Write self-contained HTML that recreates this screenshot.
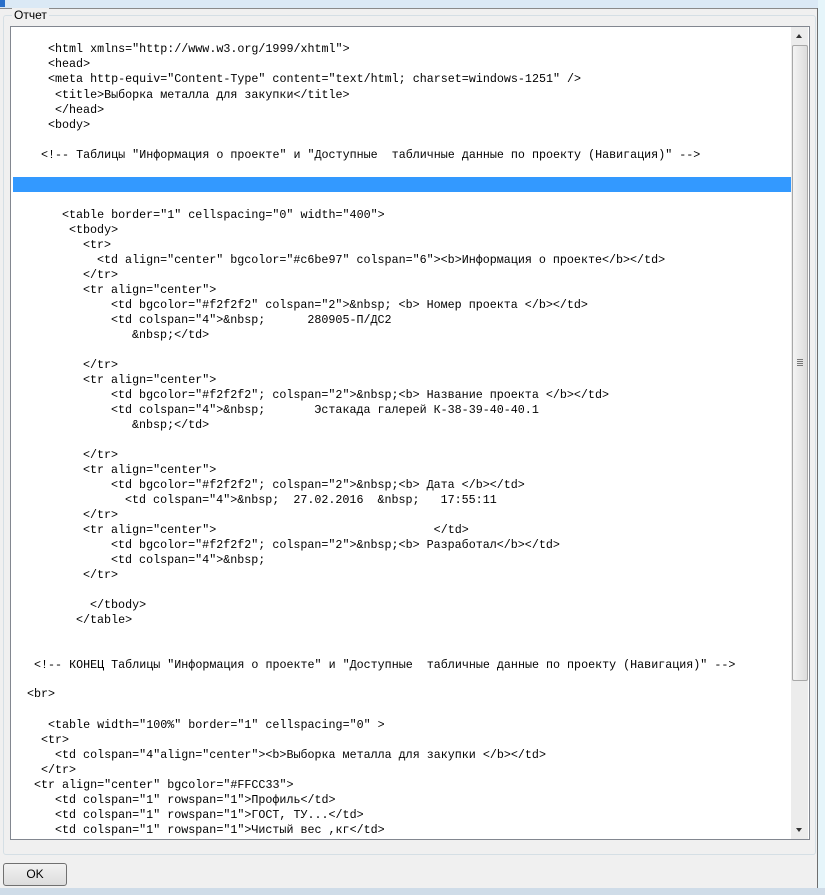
<!DOCTYPE html>
<html><head><meta charset="utf-8"><style>
body{margin:0;width:825px;height:895px;background:#f0f0f0;position:relative;overflow:hidden;font-family:"Liberation Sans",sans-serif}
.top{position:absolute;left:0;top:0;width:825px;height:8px;background:#dbe9f5}
.rightbg{position:absolute;left:818px;top:0;width:7px;height:895px;background:#e6f5fa}
.rb{position:absolute;left:817px;top:8px;width:1px;height:880px;background:#6e6e6e}
.tb{position:absolute;left:0;top:8px;width:818px;height:1px;background:#8a8a8a}
.bot{position:absolute;left:0;top:888px;width:825px;height:7px;background:#cfdce8}
.grp{position:absolute;left:3px;top:15px;width:811px;height:838px;border:1px solid #d5dfe5;border-radius:3px}
.leg{position:absolute;left:12px;top:8px;background:#f0f0f0;padding:0 2px;font-size:12px;color:#000}
.ta{position:absolute;left:10px;top:26px;width:798px;height:812px;background:#fff;border:1px solid #828790;overflow:hidden}
.l{position:absolute;white-space:pre;font-family:"Liberation Mono",monospace;font-size:11.7px;line-height:15px;color:#000}
.hl{position:absolute;left:2px;top:150px;width:778px;height:15px;background:#3399ff}
.sb{position:absolute;left:780px;top:0;width:17px;height:812px;background:#ececec}
.th{position:absolute;left:1px;top:18px;width:14px;height:634px;background:linear-gradient(90deg,#f4f4f4,#dcdcdc);border:1px solid #a8a8a8;border-radius:2px}
.ok{position:absolute;left:3px;top:863px;width:62px;height:21px;border:1px solid #707070;border-radius:3px;background:linear-gradient(#f2f2f2,#dcdcdc);font-size:12px;text-align:center;line-height:21px}
</style></head><body>
<div class="top"></div><div style="position:absolute;left:0;top:0;width:5px;height:7px;background:#2a6fc9"></div>
<div class="tb"></div><div class="rightbg"></div><div class="rb"></div><div class="bot"></div>
<div class="grp"></div><div class="leg">Отчет</div>
<div class="ta">
<div class="hl"></div>
<div class="l" style="left:37px;top:15px">&lt;html xmlns="http://www.w3.org/1999/xhtml"&gt;</div>
<div class="l" style="left:37px;top:30px">&lt;head&gt;</div>
<div class="l" style="left:37px;top:45px">&lt;meta http-equiv="Content-Type" content="text/html; charset=windows-1251" /&gt;</div>
<div class="l" style="left:44px;top:61px">&lt;title&gt;Выборка металла для закупки&lt;/title&gt;</div>
<div class="l" style="left:44px;top:76px">&lt;/head&gt;</div>
<div class="l" style="left:37px;top:91px">&lt;body&gt;</div>
<div class="l" style="left:30px;top:121px">&lt;!-- Таблицы "Информация о проекте" и "Доступные  табличные данные по проекту (Навигация)" --&gt;</div>
<div class="l" style="left:51px;top:181px">&lt;table border="1" cellspacing="0" width="400"&gt;</div>
<div class="l" style="left:58px;top:196px">&lt;tbody&gt;</div>
<div class="l" style="left:72px;top:211px">&lt;tr&gt;</div>
<div class="l" style="left:86px;top:226px">&lt;td align="center" bgcolor="#c6be97" colspan="6"&gt;&lt;b&gt;Информация о проекте&lt;/b&gt;&lt;/td&gt;</div>
<div class="l" style="left:72px;top:241px">&lt;/tr&gt;</div>
<div class="l" style="left:72px;top:256px">&lt;tr align="center"&gt;</div>
<div class="l" style="left:100px;top:271px">&lt;td bgcolor="#f2f2f2" colspan="2"&gt;&amp;nbsp; &lt;b&gt; Номер проекта &lt;/b&gt;&lt;/td&gt;</div>
<div class="l" style="left:100px;top:286px">&lt;td colspan="4"&gt;&amp;nbsp;      280905-П/ДС2</div>
<div class="l" style="left:121px;top:301px">&amp;nbsp;&lt;/td&gt;</div>
<div class="l" style="left:72px;top:331px">&lt;/tr&gt;</div>
<div class="l" style="left:72px;top:346px">&lt;tr align="center"&gt;</div>
<div class="l" style="left:100px;top:361px">&lt;td bgcolor="#f2f2f2"; colspan="2"&gt;&amp;nbsp;&lt;b&gt; Название проекта &lt;/b&gt;&lt;/td&gt;</div>
<div class="l" style="left:100px;top:376px">&lt;td colspan="4"&gt;&amp;nbsp;       Эстакада галерей К-38-39-40-40.1</div>
<div class="l" style="left:121px;top:391px">&amp;nbsp;&lt;/td&gt;</div>
<div class="l" style="left:72px;top:421px">&lt;/tr&gt;</div>
<div class="l" style="left:72px;top:436px">&lt;tr align="center"&gt;</div>
<div class="l" style="left:100px;top:451px">&lt;td bgcolor="#f2f2f2"; colspan="2"&gt;&amp;nbsp;&lt;b&gt; Дата &lt;/b&gt;&lt;/td&gt;</div>
<div class="l" style="left:114px;top:466px">&lt;td colspan="4"&gt;&amp;nbsp;  27.02.2016  &amp;nbsp;   17:55:11</div>
<div class="l" style="left:72px;top:481px">&lt;/tr&gt;</div>
<div class="l" style="left:72px;top:496px">&lt;tr align="center"&gt;                               &lt;/td&gt;</div>
<div class="l" style="left:100px;top:511px">&lt;td bgcolor="#f2f2f2"; colspan="2"&gt;&amp;nbsp;&lt;b&gt; Разработал&lt;/b&gt;&lt;/td&gt;</div>
<div class="l" style="left:100px;top:526px">&lt;td colspan="4"&gt;&amp;nbsp;</div>
<div class="l" style="left:72px;top:541px">&lt;/tr&gt;</div>
<div class="l" style="left:79px;top:571px">&lt;/tbody&gt;</div>
<div class="l" style="left:65px;top:586px">&lt;/table&gt;</div>
<div class="l" style="left:23px;top:631px">&lt;!-- КОНЕЦ Таблицы "Информация о проекте" и "Доступные  табличные данные по проекту (Навигация)" --&gt;</div>
<div class="l" style="left:16px;top:660px">&lt;br&gt;</div>
<div class="l" style="left:37px;top:691px">&lt;table width="100%" border="1" cellspacing="0" &gt;</div>
<div class="l" style="left:30px;top:706px">&lt;tr&gt;</div>
<div class="l" style="left:44px;top:721px">&lt;td colspan="4"align="center"&gt;&lt;b&gt;Выборка металла для закупки &lt;/b&gt;&lt;/td&gt;</div>
<div class="l" style="left:30px;top:736px">&lt;/tr&gt;</div>
<div class="l" style="left:23px;top:751px">&lt;tr align="center" bgcolor="#FFCC33"&gt;</div>
<div class="l" style="left:44px;top:766px">&lt;td colspan="1" rowspan="1"&gt;Профиль&lt;/td&gt;</div>
<div class="l" style="left:44px;top:781px">&lt;td colspan="1" rowspan="1"&gt;ГОСТ, ТУ...&lt;/td&gt;</div>
<div class="l" style="left:44px;top:796px">&lt;td colspan="1" rowspan="1"&gt;Чистый вес ,кг&lt;/td&gt;</div>
<div class="sb">
<div style="position:absolute;left:5px;top:7px;width:0;height:0;border-left:3px solid transparent;border-right:3px solid transparent;border-bottom:4px solid #333"></div>
<div class="th"><div style="position:absolute;left:4px;top:313px;width:6px;height:7px;background:repeating-linear-gradient(#777 0 1px,transparent 1px 2px)"></div></div>
<div style="position:absolute;left:5px;top:801px;width:0;height:0;border-left:3px solid transparent;border-right:3px solid transparent;border-top:4px solid #333"></div>
</div>
</div>
<div class="ok">OK</div>
</body></html>
